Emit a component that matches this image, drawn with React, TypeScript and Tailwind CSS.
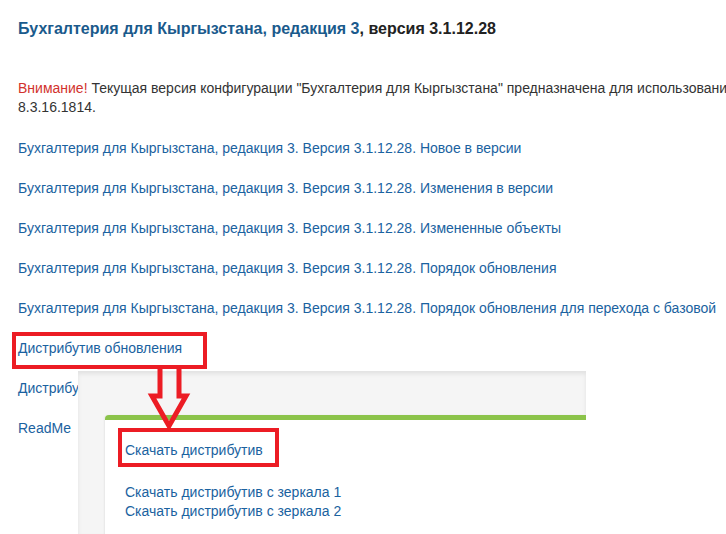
import React from 'react';

const LINKS = [
  'Бухгалтерия для Кыргызстана, редакция 3. Версия 3.1.12.28. Новое в версии',
  'Бухгалтерия для Кыргызстана, редакция 3. Версия 3.1.12.28. Изменения в версии',
  'Бухгалтерия для Кыргызстана, редакция 3. Версия 3.1.12.28. Измененные объекты',
  'Бухгалтерия для Кыргызстана, редакция 3. Версия 3.1.12.28. Порядок обновления',
  'Бухгалтерия для Кыргызстана, редакция 3. Версия 3.1.12.28. Порядок обновления для перехода с базовой',
  'Дистрибутив обновления',
  'Дистрибутив полной установки',
  'ReadMe',
];

export default function App() {
  return (
    <div className="relative w-[726px] h-[534px] overflow-hidden bg-white font-['Liberation_Sans',Arial,sans-serif] text-[14px] text-[#333]">
      <div className="w-[900px] pl-[18px] pt-[19px]">
        {/* Title */}
        <h1 className="text-[16px] leading-[20px] font-bold">
          <span className="text-[#1a5a8c]">Бухгалтерия для Кыргызстана, редакция 3</span>
          <span className="text-[#222]">, версия 3.1.12.28</span>
        </h1>

        {/* Notice */}
        <p className="mt-[40px] w-[870px] leading-[19px]">
          <span className="text-[#d2322d]">Внимание!</span> Текущая версия конфигурации "Бухгалтерия для Кыргызстана" предназначена для использования с версией платформы 8.3.16.1814.
        </p>

        {/* Links */}
        <ul className="mt-[21px] flex flex-col gap-[20px]">
          {LINKS.map((l) => (
            <li key={l} className="leading-[20px] text-[#1a62a0] whitespace-nowrap">{l}</li>
          ))}
        </ul>
      </div>

      {/* Pasted screenshot of the download dialog */}
      <div className="absolute left-[78px] top-[371px] w-[508px] h-[163px] bg-[#f5f5f5] shadow-[inset_0_3px_4px_rgba(0,0,0,0.08)]">
        <div className="ml-[27px] mt-[44px] h-[130px] bg-white border-t-[5px] border-[#8bc34a] rounded-tl-[4px] shadow-[-1px_0_2px_rgba(0,0,0,0.06)] pl-[20px] pt-[20px] text-[#1a62a0]">
          <div className="leading-[20px]">Скачать дистрибутив</div>
          <div className="mt-[23px] leading-[19px]">Скачать дистрибутив с зеркала 1</div>
          <div className="leading-[19px]">Скачать дистрибутив с зеркала 2</div>
        </div>
      </div>

      {/* Annotations */}
      <div className="absolute left-[12px] top-[332px] w-[195px] h-[37px] border-[4px] border-[#ec1c24]" />
      <div className="absolute left-[118px] top-[428px] w-[161px] h-[39px] border-[4px] border-[#ec1c24]" />
      <svg className="absolute left-0 top-0" width="726" height="534" viewBox="0 0 726 534">
        <polyline
          points="160,368 160,396 152,396 169,426 186,396 179,396 179,368"
          fill="none"
          stroke="#ec1c24"
          strokeWidth="5"
          strokeLinejoin="miter"
        />
      </svg>
    </div>
  );
}
